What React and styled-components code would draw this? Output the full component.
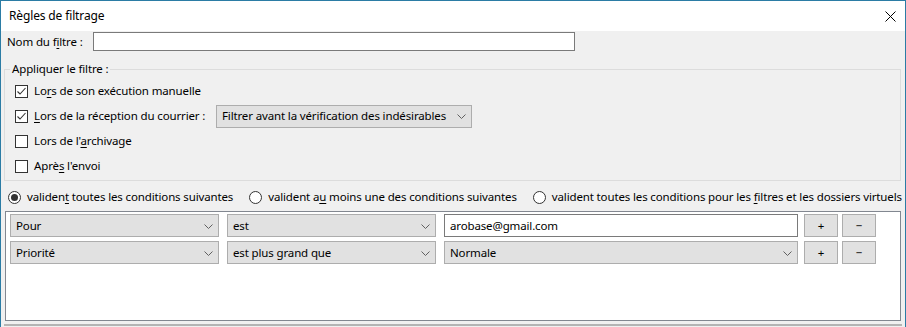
import React from "react";
import styled, { createGlobalStyle } from "styled-components";

const GlobalStyle = createGlobalStyle`
  html, body {
    margin: 0;
    padding: 0;
    background: #f0f0f0;
  }
  body {
    font-family: "Noto Sans", "Open Sans", sans-serif;
    font-size: 11.5px;
    letter-spacing: -0.14px;
    line-height: 16px;
    color: #000;
    white-space: nowrap;
  }
  u {
    text-decoration-thickness: 1px;
    text-underline-offset: 2px;
  }
`;

const Chevron = () => (
  <svg width="9" height="5" viewBox="0 0 9 5">
    <path d="M0.5 0.5 L4.5 4.5 L8.5 0.5" fill="none" stroke="#606060" strokeWidth="1" />
  </svg>
);

const Check = () => (
  <svg width="11" height="11" viewBox="0 0 11 11">
    <path d="M1.5 5.5 L4 8 L9.5 2" fill="none" stroke="#333" strokeWidth="1.1" />
  </svg>
);

const CheckRow = ({ checked, children, extra, labelWidth }) => (
  <Row>
    <Box>{checked && <Check />}</Box>
    <Label $w={labelWidth}>{children}</Label>
    {extra}
  </Row>
);

const Radio = ({ checked, children }) => (
  <RadioItem>
    <Circle>{checked && <Dot />}</Circle>
    <span>{children}</span>
  </RadioItem>
);

const Dropdown = ({ width, children }) => (
  <Select $width={width}>
    <span>{children}</span>
    <Chevron />
  </Select>
);

const App = () => {
  return (
    <>
      <GlobalStyle />
      <Window>
        <TitleBar>
          <span>Règles de filtrage</span>
          <svg width="11" height="11" viewBox="0 0 11 11">
            <path d="M0.5 0.5 L10.5 10.5 M10.5 0.5 L0.5 10.5" stroke="#000" strokeWidth="1" />
          </svg>
        </TitleBar>
        <Body>
          <NameRow>
            <NameLabel>
              Nom du f<u>i</u>ltre :
            </NameLabel>
            <NameInput />
          </NameRow>
          <Fieldset>
            <Legend>Appliquer le filtre :</Legend>
            <CheckRow checked>
              Lo<u>r</u>s de son exécution manuelle
            </CheckRow>
            <CheckRow
              checked
              labelWidth={182}
              extra={<Dropdown width={256}>Filtrer avant la vérification des indésirables</Dropdown>}
            >
              <u>L</u>ors de la réception du courrier :
            </CheckRow>
            <CheckRow>
              Lors de l'<u>a</u>rchivage
            </CheckRow>
            <CheckRow>
              Aprè<u>s</u> l'envoi
            </CheckRow>
          </Fieldset>
          <RadioRow>
            <Radio checked>
              validen<u>t</u> toutes les conditions suivantes
            </Radio>
            <Radio>
              valident a<u>u</u> moins une des conditions suivantes
            </Radio>
            <Radio>
              valident toutes les conditions pour les <u>f</u>iltres et les dossiers virtuels
            </Radio>
          </RadioRow>
          <ListBox>
            <RuleRow>
              <Dropdown width={209}>Pour</Dropdown>
              <Dropdown width={209}>est</Dropdown>
              <ValueInput>arobase@gmail.com</ValueInput>
              <Buttons>
                <Btn>+</Btn>
                <Btn>−</Btn>
              </Buttons>
            </RuleRow>
            <RuleRow>
              <Dropdown width={209}>Priorité</Dropdown>
              <Dropdown width={209}>est plus grand que</Dropdown>
              <Dropdown width={354}>Normale</Dropdown>
              <Buttons>
                <Btn>+</Btn>
                <Btn>−</Btn>
              </Buttons>
            </RuleRow>
          </ListBox>
          <Footer />
        </Body>
      </Window>
    </>
  );
};

export default App;

const Window = styled.div`
  width: 906px;
  height: 327px;
  box-sizing: border-box;
  border: 1px solid #2b7ca5;
  border-bottom: none;
  background: #f0f0f0;
  overflow: hidden;
  display: flex;
  flex-direction: column;
`;

const TitleBar = styled.div`
  height: 30px;
  flex: none;
  background: #fff;
  display: flex;
  align-items: center;
  justify-content: space-between;
  padding: 0 9px 0 8px;
  font-size: 12px;
  svg {
    margin-top: 1px;
  }
`;

const Body = styled.div`
  padding: 1px 3px 0 3px;
  display: flex;
  flex-direction: column;
`;

const NameRow = styled.div`
  display: flex;
  align-items: center;
  padding-left: 3px;
  height: 19px;
`;

const NameLabel = styled.span`
  width: 86px;
`;

const NameInput = styled.div`
  width: 482px;
  height: 19px;
  box-sizing: border-box;
  border: 1px solid #7a7a7a;
  background: #fff;
`;

const Fieldset = styled.fieldset`
  margin: 10px 0 0 0;
  width: 897px;
  box-sizing: border-box;
  border: 1px solid #dcdcdc;
  padding: 3px 10px 3px 10px;
  display: flex;
  flex-direction: column;
  gap: 3px;
`;

const Legend = styled.legend`
  padding: 0 2px;
  margin-left: -5px;
  line-height: 16px;
`;

const Row = styled.div`
  height: 22px;
  display: flex;
  align-items: center;
`;

const Label = styled.span`
  width: ${(p) => (p.$w ? `${p.$w}px` : "auto")};
  flex: none;
`;

const Box = styled.div`
  width: 13px;
  height: 13px;
  box-sizing: border-box;
  border: 1px solid #333;
  background: #fff;
  margin-right: 6px;
  display: flex;
  align-items: center;
  justify-content: center;
`;

const Select = styled.div`
  width: ${(p) => p.$width}px;
  height: 23px;
  box-sizing: border-box;
  border: 1px solid #adadad;
  background: #e1e1e1;
  display: flex;
  align-items: center;
  justify-content: space-between;
  padding: 0 5px 0 5px;
  flex: none;
  svg {
    margin-top: 1px;
  }
`;

const RadioRow = styled.div`
  margin: 7px 0 0 4px;
  height: 18px;
  display: flex;
  align-items: center;
  gap: 16px;
`;

const RadioItem = styled.div`
  display: flex;
  align-items: center;
  gap: 6px;
`;

const Circle = styled.div`
  width: 13px;
  height: 13px;
  box-sizing: border-box;
  border: 1px solid #333;
  border-radius: 50%;
  background: #fff;
  display: flex;
  align-items: center;
  justify-content: center;
`;

const Dot = styled.div`
  width: 7px;
  height: 7px;
  border-radius: 50%;
  background: #333;
`;

const ListBox = styled.div`
  margin: 5px 0 0 1px;
  width: 896px;
  height: 110px;
  box-sizing: border-box;
  border: 1px solid #828790;
  background: #fff;
  padding: 2px 4px;
  display: flex;
  flex-direction: column;
  gap: 4px;
`;

const RuleRow = styled.div`
  display: flex;
  align-items: center;
  gap: 8px;
`;

const ValueInput = styled.div`
  width: 354px;
  height: 23px;
  box-sizing: border-box;
  border: 1px solid #7a7a7a;
  background: #fff;
  display: flex;
  align-items: center;
  padding-left: 5px;
`;

const Buttons = styled.div`
  display: flex;
  gap: 4px;
  margin-left: -2px;
`;

const Btn = styled.div`
  width: 34px;
  height: 23px;
  box-sizing: border-box;
  border: 1px solid #adadad;
  background: #e1e1e1;
  display: flex;
  align-items: center;
  justify-content: center;
`;

const Footer = styled.div`
  margin-top: 3px;
  border-top: 2px solid #b4b4b4;
  height: 10px;
`;
